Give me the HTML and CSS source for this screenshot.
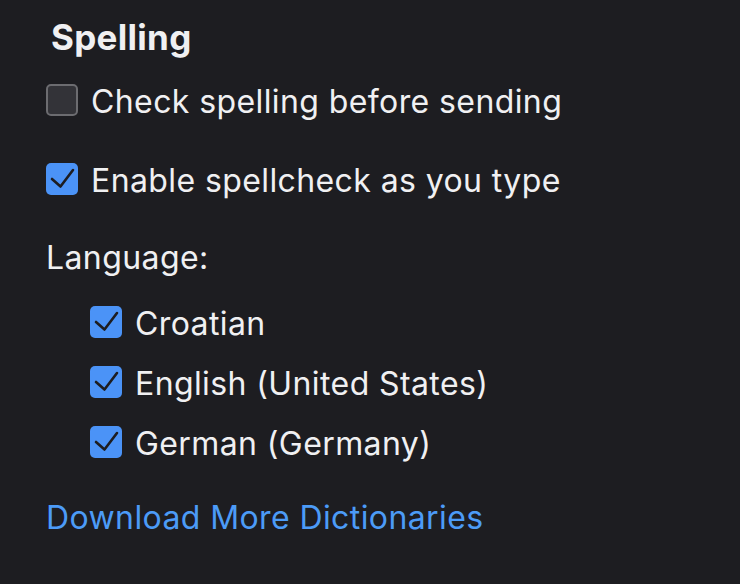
FILE: index.html
```html
<!DOCTYPE html>
<html>
<head>
<meta charset="utf-8">
<link rel="stylesheet" href="styles.css">
</head>
<body>
<div class="panel">
  <h2 class="title">Spelling</h2>
  <label class="row main first">
    <span class="box"></span>
    <span class="label">Check spelling before sending</span>
  </label>
  <label class="row main">
    <span class="box checked"><svg viewBox="0 0 32 32"><path d="M6 16 L14.5 23.5 L27 7"/></svg></span>
    <span class="label">Enable spellcheck as you type</span>
  </label>
  <div class="lang">Language:</div>
  <div class="langs">
    <label class="row sub">
      <span class="box checked"><svg viewBox="0 0 32 32"><path d="M6 16 L14.5 23.5 L27 7"/></svg></span>
      <span class="label">Croatian</span>
    </label>
    <label class="row sub">
      <span class="box checked"><svg viewBox="0 0 32 32"><path d="M6 16 L14.5 23.5 L27 7"/></svg></span>
      <span class="label">English (United States)</span>
    </label>
    <label class="row sub">
      <span class="box checked"><svg viewBox="0 0 32 32"><path d="M6 16 L14.5 23.5 L27 7"/></svg></span>
      <span class="label">German (Germany)</span>
    </label>
  </div>
  <a class="link" href="#">Download More Dictionaries</a>
</div>
</body>
</html>
```

FILE: styles.css
```css
html, body {
  margin: 0;
  padding: 0;
  background: #1d1d21;
  height: 100%;
}
body {
  font-family: Inter, "Noto Sans", "Liberation Sans", sans-serif;
  color: #f0f0f2;
}
.panel {
  padding: 14px 0 0 46px;
  display: flex;
  flex-direction: column;
}
.title {
  margin: 0 0 0 5px;
  font-size: 35px;
  font-weight: 700;
  line-height: 46px;
  letter-spacing: 0.3px;
}
.row {
  display: flex;
  align-items: center;
  gap: 13px;
  height: 40px;
  font-size: 32px;
  line-height: 40px;
  letter-spacing: 0.4px;
}
.label {
  line-height: 36px;
  padding-top: 4px;
}
.main.first {
  margin-top: 20px;
}
.main + .main {
  margin-top: 39px;
}
.box {
  width: 32px;
  height: 32px;
  box-sizing: border-box;
  border-radius: 5px;
  border: 2px solid #6c6c70;
  background: #333338;
  flex: none;
  display: flex;
}
.box.checked {
  border: none;
  background: #4b93f7;
}
.box svg {
  width: 32px;
  height: 32px;
}
.box svg path {
  fill: none;
  stroke: #1d1d21;
  stroke-width: 2.6;
  stroke-linecap: round;
  stroke-linejoin: round;
}
.lang {
  margin-top: 39px;
  font-size: 32px;
  line-height: 40px;
  letter-spacing: 0.4px;
}
.langs {
  margin-top: 24px;
  padding-left: 44px;
  display: flex;
  flex-direction: column;
  gap: 20px;
}
.link {
  margin-top: 36px;
  font-size: 32px;
  line-height: 40px;
  letter-spacing: 0.4px;
  color: #4c9bf7;
  text-decoration: none;
  align-self: flex-start;
}
```
